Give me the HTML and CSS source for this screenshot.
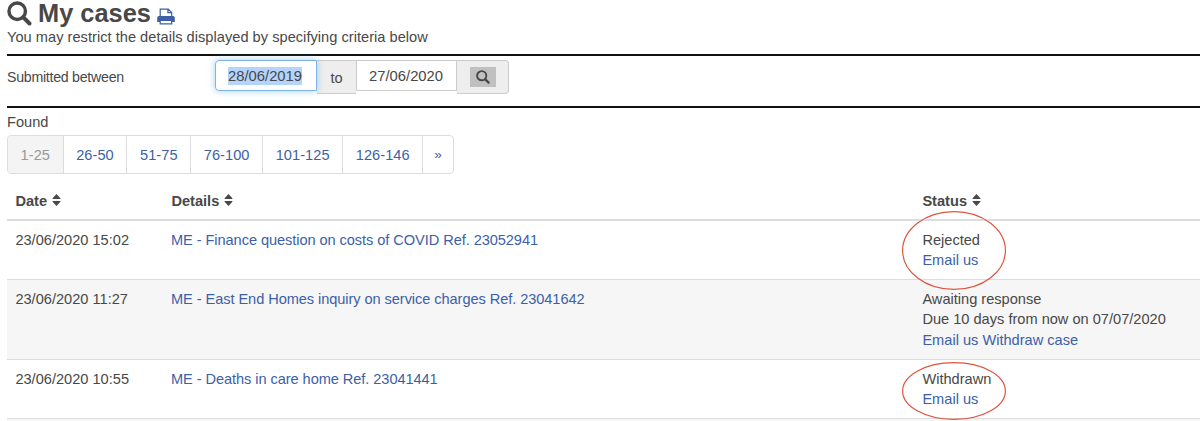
FILE: index.html
```
<!DOCTYPE html>
<html lang="en">
<head>
    <meta charset="UTF-8">
    <meta name="viewport" content="width=device-width, initial-scale=1.0">
    <title>My cases</title>
    <link rel="stylesheet" href="styles.css">
</head>
<body>

<svg class="symbols" aria-hidden="true">
    <symbol id="icon-search" viewBox="0 0 24 24">
        <circle cx="9.8" cy="9.8" r="7.9" fill="none" stroke="currentColor" stroke-width="3.3"/>
        <path d="M15.6 15.6l6 6" stroke="currentColor" stroke-width="3.8" stroke-linecap="round"/>
    </symbol>
    <symbol id="icon-print" viewBox="0 0 18 16">
        <path d="M3.2 8V.7h8l3.5 3.2V8M10.9 1v3.2h3.6" fill="none" stroke="currentColor" stroke-width="1.2"/>
        <path d="M2 7.4h14a1.8 1.8 0 0 1 1.8 1.8v4.2H.2V9.2A1.8 1.8 0 0 1 2 7.4z" fill="currentColor"/>
        <path d="M3.2 12h11.5v3.4H3.2z" fill="#fff" stroke="currentColor" stroke-width="1.2"/>
    </symbol>
    <symbol id="icon-sort" viewBox="0 0 9 12">
        <path d="M4.5 0L8.4 4.2Q8.8 5 8 5H1Q.2 5 .6 4.2zM4.5 12L.6 7.8Q.2 7 1 7h7q.8 0 .4.8z" fill="currentColor"/>
    </symbol>
</svg>

<div class="page">
    <h1>
        <svg class="title-icon"><use href="#icon-search"/></svg>
        <span>My cases</span>
        <a href="#" class="print"><svg><use href="#icon-print"/></svg></a>
    </h1>
    <p class="intro">You may restrict the details displayed by specifying criteria below</p>

    <form class="filter">
        <label for="from">Submitted between</label>
        <div class="date-range">
            <div class="date active" id="from"><span>28/06/2019</span></div>
            <div class="addon">to</div>
            <div class="date">27/06/2020</div>
            <button type="button" class="addon search"><span><svg><use href="#icon-search"/></svg></span></button>
        </div>
    </form>

    <p class="found">Found</p>
    <div class="pagination">
        <span class="disabled">1-25</span>
        <a href="#">26-50</a>
        <a href="#">51-75</a>
        <a href="#">76-100</a>
        <a href="#">101-125</a>
        <a href="#">126-146</a>
        <a href="#" class="next">»</a>
    </div>

    <table class="cases">
        <thead>
            <tr>
                <th class="col-date">Date <svg class="sort"><use href="#icon-sort"/></svg></th>
                <th class="col-details">Details <svg class="sort"><use href="#icon-sort"/></svg></th>
                <th>Status <svg class="sort"><use href="#icon-sort"/></svg></th>
            </tr>
        </thead>
        <tbody>
            <tr>
                <td>23/06/2020 15:02</td>
                <td class="details"><a href="#">ME - Finance question on costs of COVID Ref. 23052941</a></td>
                <td>
                    <div class="status">
                        Rejected<br><a href="#">Email us</a>
                        <svg class="ring ring-tall"><ellipse cx="52" cy="39.5" rx="51.4" ry="38.9"/></svg>
                    </div>
                </td>
            </tr>
            <tr>
                <td>23/06/2020 11:27</td>
                <td class="details"><a href="#">ME - East End Homes inquiry on service charges Ref. 23041642</a></td>
                <td>Awaiting response<br>Due 10 days from now on 07/07/2020<br><a href="#">Email us</a> <a href="#">Withdraw case</a></td>
            </tr>
            <tr>
                <td>23/06/2020 10:55</td>
                <td class="details"><a href="#">ME - Deaths in care home Ref. 23041441</a></td>
                <td>
                    <div class="status">
                        Withdrawn<br><a href="#">Email us</a>
                        <svg class="ring"><ellipse cx="52" cy="29" rx="51.4" ry="28.4"/></svg>
                    </div>
                </td>
            </tr>
            <tr>
                <td colspan="3"></td>
            </tr>
        </tbody>
    </table>
</div>

</body>
</html>
```

FILE: styles.css
```
* {
    box-sizing: border-box;
}

body {
    margin: 0;
    height: 421px;
    overflow: hidden;
    background: #fff;
    color: #484848;
    font-family: "Liberation Sans", Arial, sans-serif;
    font-size: 14.6px;
    line-height: 20.6px;
}

a {
    color: #3c5fa8;
    text-decoration: none;
}

svg {
    display: block;
}

.symbols {
    display: none;
}

.page {
    padding-left: 7px;
}

h1 {
    display: flex;
    align-items: flex-start;
    height: 27px;
    margin: 0;
    font-size: 25.4px;
    line-height: 26px;
}

.title-icon {
    width: 25px;
    height: 25px;
    margin: 1px 6px 0 0;
}

.print svg {
    width: 18px;
    height: 17px;
    margin: 8px 0 0 6px;
}

.intro {
    margin: 0;
    height: 27px;
    line-height: 21px;
    letter-spacing: 0.03px;
}

.filter {
    display: flex;
    height: 54px;
    padding-top: 4px;
    border-top: 2px solid #111;
    border-bottom: 2px solid #111;
}

.filter label {
    width: 208px;
    padding-top: 7px;
    font-size: 14.2px;
    letter-spacing: -0.27px;
}

.date-range {
    display: flex;
    align-items: flex-start;
}

.date {
    width: 101px;
    height: 31px;
    padding: 5px 0 0 12px;
    border: 1px solid #ccc;
    font-size: 14.8px;
    line-height: 20px;
}

.date.active {
    width: 102px;
    border-color: #7fb2e8;
    border-radius: 4px 0 0 4px;
    box-shadow: 0 0 7px rgba(102, 175, 233, 0.6);
    z-index: 1;
}

.date.active span {
    display: inline-block;
    height: 18px;
    line-height: 19px;
    background: #b4d4fc;
}

.addon {
    width: 39px;
    height: 34px;
    padding-top: 7px;
    border: solid #ccc;
    border-width: 1px 0;
    background: #eee;
    text-align: center;
    color: #484848;
}

.search {
    display: flex;
    width: 52px;
    padding: 6px 0 0 13px;
    border-width: 1px 1px 1px 0;
    border-radius: 0 4px 4px 0;
}

.search span {
    width: 26px;
    height: 20px;
    padding: 3px 6px;
    background: #c0c0c0;
}

.search svg {
    width: 14px;
    height: 14px;
}

.found {
    margin: 0;
    height: 27px;
    padding-top: 4px;
}

.pagination {
    display: flex;
    width: 447px;
    height: 39px;
    border: 1px solid #ddd;
    border-radius: 4px;
    overflow: hidden;
}

.pagination a,
.pagination span {
    flex-shrink: 0;
    padding: 9px 12.6px;
    border-right: 1px solid #ddd;
    letter-spacing: 0.05px;
    line-height: 20px;
    white-space: nowrap;
}

.pagination .disabled {
    background: #f4f4f4;
    color: #999;
}

.pagination .next {
    flex: 1;
    padding: 9px 0;
    border-right: none;
    font-size: 13.5px;
    text-align: center;
}

.cases {
    width: 1193px;
    margin-top: 8px;
    table-layout: fixed;
    border-collapse: separate;
    border-spacing: 0;
}

.cases th {
    height: 39px;
    padding: 1px 8px 0 8.4px;
    border-bottom: 2px solid #ddd;
    text-align: left;
}

.col-date {
    width: 156px;
}

.col-details {
    width: 751px;
}

.sort {
    display: inline-block;
    width: 9px;
    height: 12px;
    margin-left: 1px;
}

.cases td {
    padding: 8.6px 8px 8.4px 8.4px;
    border-bottom: 1px solid #ddd;
    vertical-align: top;
}

.cases .details {
    padding-left: 8px;
    letter-spacing: -0.07px;
}

.cases tbody tr:nth-child(even) {
    background: #f6f6f6;
}

.status {
    position: relative;
}

/* red markers drawn round the closed cases */
.ring {
    position: absolute;
    top: -6.5px;
    left: -20.6px;
    width: 104px;
    height: 58px;
    z-index: 1;
    pointer-events: none;
}

.ring-tall {
    top: -18.4px;
    height: 79px;
}

.ring ellipse {
    fill: none;
    stroke: #dd5540;
    stroke-width: 1.2;
}
```
